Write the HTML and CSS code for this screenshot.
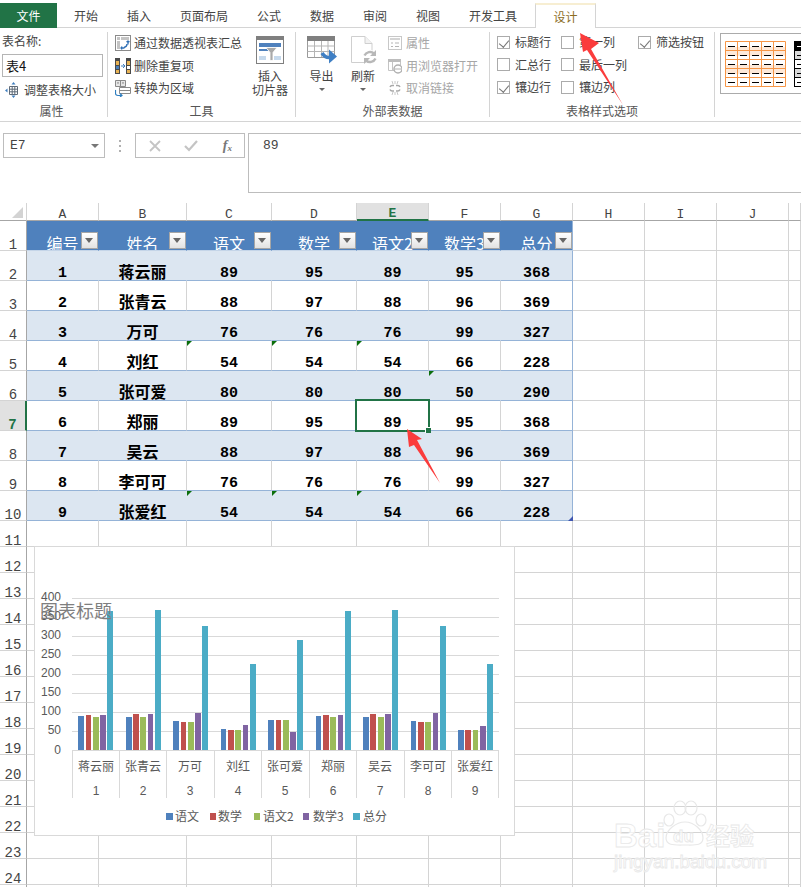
FILE: index.html
```html
<!DOCTYPE html>
<html lang="zh-CN">
<head>
<meta charset="utf-8">
<title>Excel 表格设计</title>
<link rel="stylesheet" href="styles.css">
</head>
<body>
<nav class="tabs">
  <div class="tab-file">文件</div>
  <ul class="tab-list">
    <li>开始</li><li>插入</li><li>页面布局</li><li>公式</li><li>数据</li><li>审阅</li><li>视图</li><li>开发工具</li>
  </ul>
  <div class="tab-active">设计</div>
</nav>

<section class="ribbon">
  <div class="group g-props">
    <div class="group-body">
      <div class="field-label">表名称:</div>
      <div class="name-input">表4</div>
      <div class="row-btn resize-btn">
        <svg width="16" height="16" viewBox="0 0 16 16"><path d="M4.5 4.5h8v8h-8zM7.2 4.5v8M9.8 4.5v8M4.500 7.200h8M4.500 9.800h8" fill="#fff" stroke="#5f6b78"/><path d="M8.500 0l2 2.500h-4zM8.500 16l2-2.500h-4zM0 8.500l2.500-2v4z" fill="#3f7fbf"/></svg>
        <span>调整表格大小</span>
      </div>
    </div>
    <div class="group-label">属性</div>
  </div>

  <div class="group g-tools">
    <div class="group-body tools-body">
      <div class="btn-list tools-list">
        <div class="row-btn">
          <svg width="16" height="16" viewBox="0 0 16 16"><rect x=".5" y=".5" width="15" height="15" fill="#fff" stroke="#8a8a8a"/><path d="M2 2h3v3H2zM6 2h8v3H6zM2 6h3v8H2z" fill="#c4c4c4"/><path d="M6 13h3.500M13 6v3.500M7 11.500L6 13l1 1.500M11.500 7L13 6l1.500 1M12 9c0 2-1 3-3 3.500" fill="none" stroke="#2f6fb5" stroke-width="1.300"/></svg>
          <span>通过数据透视表汇总</span>
        </div>
        <div class="row-btn">
          <svg width="16" height="16" viewBox="0 0 16 16"><path d="M0 0h5v16H0zM11 0h5v16h-5z" fill="#4a4a4a"/><path d="M1 3h3v4H1zM12 3h3v4h-3z" fill="#e8b354"/><path d="M1 8h3v3H1z" fill="#4a7fb8"/><path d="M1 12h3v3H1zM12 12h3v3h-3z" fill="#e8b354"/><path d="M12 8h3v3h-3z" fill="#fff"/><path d="M6 8h3.500M8 6l2 2-2 2" fill="none" stroke="#3f7fbf"/></svg>
          <span>删除重复项</span>
        </div>
        <div class="row-btn">
          <svg width="16" height="17" viewBox="0 0 16 17"><path d="M.5.500h10v6H.5z" fill="#e6e6e6" stroke="#8a8a8a"/><path d="M5.500.500v6" stroke="#8a8a8a"/><path d="M2 2.500h2l-1 1.500zM7 2.500h2l-1 1.500z" fill="#666"/><path d="M4.500 7.500h11v6h-11z" fill="#fff" stroke="#8a8a8a"/><path d="M4.500 10.500h11" stroke="#8a8a8a"/><path d="M.5 10v3.500c0 1.500 1 2 2.500 2h4M5 13.500l2 2-2 1.500M.5 10l-.5 1" fill="none" stroke="#2f7fc0" stroke-width="1.200"/></svg>
          <span>转换为区域</span>
        </div>
      </div>
      <div class="big-btn slicer-btn">
        <svg width="28" height="28" viewBox="0 0 28 28"><rect x=".5" y=".5" width="27" height="27" fill="#fff" stroke="#7f7f7f"/><rect width="28" height="4" fill="#7f7f7f"/><rect x="3" y="7" width="22" height="4" fill="#4f81bd"/><path d="M3 13h8l2 2H3z" fill="#4f81bd"/><path d="M3 20h7v4H3zM18 20h7v4h-7z" fill="#c6d9ec"/><path d="M10 11.500h11l-4 5v8h-3v-8z" fill="#a9a9a9" stroke="#fff" stroke-width=".8"/></svg>
        <span class="big-label">插入<br>切片器</span>
      </div>
    </div>
    <div class="group-label">工具</div>
  </div>

  <div class="group g-data">
    <div class="group-body tools-body">
      <div class="big-btn export-btn">
        <svg width="30" height="28" viewBox="0 0 30 28"><path d="M.5 4.500h27v17H.5z" fill="#fff" stroke="#9a9a9a"/><rect width="28" height="5" fill="#7f7f7f"/><path d="M.5 10h27M.5 15.500h27M7.500 5v16M14.500 5v16M21 5v16" stroke="#b5b5b5"/><path d="M15 17c3 5 6 5 10 4" fill="none" stroke="#3f7fc4" stroke-width="3.500"/><path d="M22 13.500l8 7-8 7z" fill="#3f7fc4"/></svg>
        <span class="big-label">导出</span>
        <i class="caret"></i>
      </div>
      <div class="big-btn refresh-btn">
        <svg width="27" height="28" viewBox="0 0 27 28"><path d="M1.500 .500H15l7 7v19H1.500z" fill="#fff" stroke="#cfcfcf"/><path d="M15 .500v7h7" fill="#f2f2f2" stroke="#cfcfcf"/><circle cx="20" cy="21" r="7" fill="#fff"/><path d="M14.500 19.500A6 6 0 0 1 24 17.500M25.500 22.500A6 6 0 0 1 16 24.500" fill="none" stroke="#b8b8b8" stroke-width="2.400"/><path d="M26 14v6h-6zM14 28v-6h6z" fill="#b8b8b8"/></svg>
        <span class="big-label">刷新</span>
        <i class="caret"></i>
      </div>
      <div class="btn-list data-list">
        <div class="row-btn off">
          <svg width="14" height="14" viewBox="0 0 14 14"><rect x=".5" y=".5" width="13" height="13" fill="#fff" stroke="#c8c8c8"/><path d="M2 3h10" stroke="#d4d4d4" stroke-width="2"/><path d="M3 7h2M3 10.500h2M7 7h4M7 10.500h4" stroke="#b5b5b5"/></svg>
          <span>属性</span>
        </div>
        <div class="row-btn off">
          <svg width="14" height="16" viewBox="0 0 14 16"><path d="M.5 1.500h12v11H.5z" fill="#fff" stroke="#c4c4c4"/><rect width="13" height="3" y="1" fill="#bdbdbd"/><path d="M4.500 4v8" stroke="#c4c4c4"/><circle cx="10" cy="11" r="4" fill="#fff" stroke="#b0b0b0" stroke-width="1.500"/><path d="M7 11h6" stroke="#b0b0b0"/></svg>
          <span>用浏览器打开</span>
        </div>
        <div class="row-btn off">
          <svg width="14" height="14" viewBox="0 0 14 14"><path d="M2 6a2.500 2.500 0 0 1 2.500-1.500H6M8 4.500h1.500A2.500 2.500 0 0 1 12 6M2 8.500A2.500 2.500 0 0 0 4.500 10H6M8 10h1.500A2.500 2.500 0 0 0 12 8.500" fill="none" stroke="#a8a8a8" stroke-width="1.500"/><path d="M4 0l1 3M7 0v3M10 0L9 3M4 14l1-3M7 14v-3M10 14l-1-3" stroke="#c8c8c8"/></svg>
          <span>取消链接</span>
        </div>
      </div>
    </div>
    <div class="group-label">外部表数据</div>
  </div>

  <div class="group g-options">
    <div class="group-body option-grid">
      <label class="opt"><i class="box on"></i>标题行</label>
      <label class="opt"><i class="box"></i>第一列</label>
      <label class="opt"><i class="box on"></i>筛选按钮</label>
      <label class="opt"><i class="box"></i>汇总行</label>
      <label class="opt"><i class="box"></i>最后一列</label>
      <span></span>
      <label class="opt"><i class="box on"></i>镶边行</label>
      <label class="opt"><i class="box"></i>镶边列</label>
      <span></span>
    </div>
    <div class="group-label">表格样式选项</div>
  </div>

  <div class="group g-gallery">
    <div class="gallery">
      <svg width="86" height="59" viewBox="0 0 86 59">
        <g fill="#fde9d9"><rect x="4" y="13" width="61" height="9"/><rect x="4" y="31" width="61" height="9"/></g>
        <path d="M4.500 7.500h60v45h-60zM4.500 16.500h60M4.500 25.500h60M4.500 34.500h60M4.500 43.500h60M16.500 7.500v45M28.500 7.500v45M40.500 7.500v45M52.500 7.500v45" fill="none" stroke="#f79646"/>
        <path d="M7 12.500h7M19 12.500h7M31 12.500h7M43 12.500h7M55 12.500h7M7 21.500h7M19 21.500h7M31 21.500h7M43 21.500h7M55 21.500h7M7 30.500h7M19 30.500h7M31 30.500h7M43 30.500h7M55 30.500h7M7 39.500h7M19 39.500h7M31 39.500h7M43 39.500h7M55 39.500h7M7 48.500h7M19 48.500h7M31 48.500h7M43 48.500h7M55 48.500h7" stroke="#000"/>
        <rect x="73" y="7" width="13" height="10" fill="#000"/>
        <rect x="74" y="17" width="12" height="8" fill="#d9d9d9"/><rect x="74" y="35" width="12" height="8" fill="#d9d9d9"/>
        <path d="M73.500 7v46M73 25.500h13M73 34.500h13M73 43.500h13M73 52.500h13M73 16.500h13" fill="none" stroke="#000"/>
        <path d="M76 12.500h7" stroke="#fff"/><path d="M76 21.500h7M76 30.500h7M76 39.500h7M76 48.500h7" stroke="#000"/>
      </svg>
    </div>
  </div>
</section>

<section class="formula">
  <div class="name-box"><span>E7</span><i class="caret dark"></i></div>
  <div class="dots"><i></i><i></i><i></i></div>
  <div class="fx-box">
    <svg width="14" height="12" viewBox="0 0 14 12"><path d="M2 1l10 10M12 1L2 11" stroke="#c4c4c4" stroke-width="1.800"/></svg>
    <svg class="check" width="14" height="12" viewBox="0 0 14 12"><path d="M1 6l4 4 8-9" fill="none" stroke="#c4c4c4" stroke-width="2.200"/></svg>
    <span class="fx">f<sub>x</sub></span>
  </div>
  <div class="formula-input">89</div>
</section>

<main class="sheet">
  <table class="grid">
    <colgroup>
      <col class="w27"><col class="w72"><col class="w88"><col class="w85"><col class="w85"><col class="w72"><col class="w72"><col class="w72"><col class="w72"><col class="w72"><col class="w72"><col class="w12">
    </colgroup>
    <thead>
      <tr class="cols">
        <th class="corner"><i></i></th><th>A</th><th>B</th><th>C</th><th>D</th><th class="cur">E</th><th>F</th><th>G</th><th>H</th><th>I</th><th>J</th><th></th>
      </tr>
    </thead>
    <tbody>
      <tr class="head"><th class="rh">1</th><td>编号<i class="flt"></i></td><td>姓名<i class="flt"></i></td><td>语文<i class="flt"></i></td><td>数学<i class="flt"></i></td><td>语文2<i class="flt"></i></td><td>数学3<i class="flt"></i></td><td>总分<i class="flt"></i></td><td class="x"></td><td class="x"></td><td class="x"></td><td class="x"></td></tr>
      <tr class="data band"><th class="rh">2</th><td>1</td><td class="nm">蒋云丽</td><td>89</td><td>95</td><td>89</td><td>95</td><td>368</td><td class="x"></td><td class="x"></td><td class="x"></td><td class="x"></td></tr>
      <tr class="data"><th class="rh">3</th><td>2</td><td class="nm">张青云</td><td>88</td><td>97</td><td>88</td><td>96</td><td>369</td><td class="x"></td><td class="x"></td><td class="x"></td><td class="x"></td></tr>
      <tr class="data band"><th class="rh">4</th><td>3</td><td class="nm">万可</td><td>76</td><td>76</td><td>76</td><td>99</td><td>327</td><td class="x"></td><td class="x"></td><td class="x"></td><td class="x"></td></tr>
      <tr class="data"><th class="rh">5</th><td>4</td><td class="nm">刘红</td><td class="tri">54</td><td class="tri">54</td><td class="tri">54</td><td>66</td><td>228</td><td class="x"></td><td class="x"></td><td class="x"></td><td class="x"></td></tr>
      <tr class="data band"><th class="rh">6</th><td>5</td><td class="nm">张可爱</td><td>80</td><td>80</td><td>80</td><td class="tri">50</td><td>290</td><td class="x"></td><td class="x"></td><td class="x"></td><td class="x"></td></tr>
      <tr class="data"><th class="rh cur">7</th><td>6</td><td class="nm">郑丽</td><td>89</td><td>95</td><td class="sel">89<i class="handle"></i></td><td>95</td><td>368</td><td class="x"></td><td class="x"></td><td class="x"></td><td class="x"></td></tr>
      <tr class="data band"><th class="rh">8</th><td>7</td><td class="nm">吴云</td><td>88</td><td>97</td><td>88</td><td>96</td><td>369</td><td class="x"></td><td class="x"></td><td class="x"></td><td class="x"></td></tr>
      <tr class="data"><th class="rh">9</th><td>8</td><td class="nm">李可可</td><td>76</td><td>76</td><td>76</td><td>99</td><td>327</td><td class="x"></td><td class="x"></td><td class="x"></td><td class="x"></td></tr>
      <tr class="data band"><th class="rh">10</th><td>9</td><td class="nm">张爱红</td><td class="tri">54</td><td class="tri">54</td><td class="tri">54</td><td>66</td><td class="end">228</td><td class="x"></td><td class="x"></td><td class="x"></td><td class="x"></td></tr>
      <tr class="sm"><th class="rh">11</th><td></td><td></td><td></td><td></td><td></td><td></td><td></td><td></td><td></td><td></td><td></td></tr>
      <tr class="sm"><th class="rh">12</th><td></td><td></td><td></td><td></td><td></td><td></td><td></td><td></td><td></td><td></td><td></td></tr>
      <tr class="sm"><th class="rh">13</th><td></td><td></td><td></td><td></td><td></td><td></td><td></td><td></td><td></td><td></td><td></td></tr>
      <tr class="sm"><th class="rh">14</th><td></td><td></td><td></td><td></td><td></td><td></td><td></td><td></td><td></td><td></td><td></td></tr>
      <tr class="sm"><th class="rh">15</th><td></td><td></td><td></td><td></td><td></td><td></td><td></td><td></td><td></td><td></td><td></td></tr>
      <tr class="sm"><th class="rh">16</th><td></td><td></td><td></td><td></td><td></td><td></td><td></td><td></td><td></td><td></td><td></td></tr>
      <tr class="sm"><th class="rh">17</th><td></td><td></td><td></td><td></td><td></td><td></td><td></td><td></td><td></td><td></td><td></td></tr>
      <tr class="sm"><th class="rh">18</th><td></td><td></td><td></td><td></td><td></td><td></td><td></td><td></td><td></td><td></td><td></td></tr>
      <tr class="sm"><th class="rh">19</th><td></td><td></td><td></td><td></td><td></td><td></td><td></td><td></td><td></td><td></td><td></td></tr>
      <tr class="sm"><th class="rh">20</th><td></td><td></td><td></td><td></td><td></td><td></td><td></td><td></td><td></td><td></td><td></td></tr>
      <tr class="sm"><th class="rh">21</th><td></td><td></td><td></td><td></td><td></td><td></td><td></td><td></td><td></td><td></td><td></td></tr>
      <tr class="sm"><th class="rh">22</th><td></td><td></td><td></td><td></td><td></td><td></td><td></td><td></td><td></td><td></td><td></td></tr>
      <tr class="sm"><th class="rh">23</th><td></td><td></td><td></td><td></td><td></td><td></td><td></td><td></td><td></td><td></td><td></td></tr>
      <tr class="sm"><th class="rh">24</th><td></td><td></td><td></td><td></td><td></td><td></td><td></td><td></td><td></td><td></td><td></td></tr>
      <tr class="sm"><th class="rh"></th><td></td><td></td><td></td><td></td><td></td><td></td><td></td><td></td><td></td><td></td><td></td></tr>
    </tbody>
  </table>

  <svg class="chart" width="482" height="290" viewBox="34 546 482 290">
    <rect x="34.500" y="546.500" width="480" height="289" fill="#fff" stroke="#d9d9d9"/>
    <path class="gridline" d="M72 598.500h427M72 617.500h427M72 636.500h427M72 655.500h427M72 674.500h427M72 693.500h427M72 712.500h427M72 731.500h427"/>
    <path class="axis" d="M72 750.500h427M72.500 750v48M119.500 750v48M166.500 750v48M214.500 750v48M261.500 750v48M309.500 750v48M356.500 750v48M404.500 750v48M451.500 750v48M498.500 750v48"/>
    <g class="ticks">
      <text x="61" y="601">400</text><text x="61" y="620">350</text><text x="61" y="639">300</text><text x="61" y="658">250</text><text x="61" y="677">200</text><text x="61" y="696">150</text><text x="61" y="715">100</text><text x="61" y="734">50</text><text x="61" y="754">0</text>
    </g>
    <g class="s1">
      <rect x="78" y="716" width="6" height="34"/><rect x="126" y="717" width="6" height="33"/><rect x="173" y="721" width="6" height="29"/><rect x="221" y="729" width="5" height="21"/><rect x="268" y="720" width="6" height="30"/><rect x="316" y="716" width="5" height="34"/><rect x="363" y="717" width="6" height="33"/><rect x="411" y="721" width="5" height="29"/><rect x="458" y="730" width="6" height="20"/>
    </g>
    <g class="s2">
      <rect x="86" y="715" width="5" height="35"/><rect x="133" y="714" width="6" height="36"/><rect x="181" y="722" width="5" height="28"/><rect x="228" y="730" width="6" height="20"/><rect x="276" y="720" width="5" height="30"/><rect x="323" y="715" width="6" height="35"/><rect x="370" y="714" width="6" height="36"/><rect x="418" y="722" width="6" height="28"/><rect x="465" y="730" width="6" height="20"/>
    </g>
    <g class="s3">
      <rect x="93" y="717" width="6" height="33"/><rect x="140" y="717" width="6" height="33"/><rect x="188" y="722" width="6" height="28"/><rect x="235" y="730" width="6" height="20"/><rect x="283" y="720" width="6" height="30"/><rect x="330" y="717" width="6" height="33"/><rect x="378" y="717" width="6" height="33"/><rect x="425" y="722" width="6" height="28"/><rect x="473" y="730" width="5" height="20"/>
    </g>
    <g class="s4">
      <rect x="100" y="715" width="6" height="35"/><rect x="148" y="714" width="5" height="36"/><rect x="195" y="713" width="6" height="37"/><rect x="243" y="725" width="5" height="25"/><rect x="290" y="732" width="6" height="18"/><rect x="338" y="715" width="5" height="35"/><rect x="385" y="714" width="6" height="36"/><rect x="433" y="713" width="5" height="37"/><rect x="480" y="726" width="6" height="24"/>
    </g>
    <g class="s5">
      <rect x="107" y="611" width="6" height="139"/><rect x="155" y="610" width="6" height="140"/><rect x="202" y="626" width="6" height="124"/><rect x="250" y="664" width="6" height="86"/><rect x="297" y="640" width="6" height="110"/><rect x="345" y="611" width="6" height="139"/><rect x="392" y="610" width="6" height="140"/><rect x="440" y="626" width="6" height="124"/><rect x="487" y="664" width="6" height="86"/>
    </g>
    <text class="chart-title" x="40" y="618">图表标题</text>
    <g class="cat">
      <text x="96" y="771">蒋云丽</text><text x="143" y="771">张青云</text><text x="190" y="771">万可</text><text x="238" y="771">刘红</text><text x="285" y="771">张可爱</text><text x="333" y="771">郑丽</text><text x="380" y="771">吴云</text><text x="428" y="771">李可可</text><text x="475" y="771">张爱红</text>
    </g>
    <g class="idx">
      <text x="96" y="795">1</text><text x="143" y="795">2</text><text x="190" y="795">3</text><text x="238" y="795">4</text><text x="285" y="795">5</text><text x="333" y="795">6</text><text x="380" y="795">7</text><text x="428" y="795">8</text><text x="475" y="795">9</text>
    </g>
    <g class="legend">
      <rect class="k1" x="166" y="813" width="7" height="7"/><text x="175" y="821">语文</text>
      <rect class="k2" x="210" y="813" width="6" height="7"/><text x="218" y="821">数学</text>
      <rect class="k3" x="254" y="813" width="6" height="7"/><text x="263" y="821">语文2</text>
      <rect class="k4" x="303" y="813" width="6" height="7"/><text x="313" y="821">数学3</text>
      <rect class="k5" x="353" y="813" width="7" height="7"/><text x="363" y="821">总分</text>
    </g>
  </svg>
</main>

<svg class="overlay" width="801" height="887" viewBox="0 0 801 887">
  <g class="wm">
    <text class="wm-bai" x="614" y="847">Bai</text>
    <ellipse cx="680" cy="808" rx="6" ry="7"/><ellipse cx="691" cy="808" rx="6" ry="7"/><ellipse cx="669" cy="820" rx="5" ry="6"/><ellipse cx="701" cy="820" rx="5" ry="6"/>
    <path d="M666 838c0-8 10-16 19-16s18 8 18 16-8 7-18 7-19 1-19-7z"/>
    <text class="wm-du" x="673" y="842">du</text>
    <text class="wm-cn" x="706" y="845">经验</text>
    <text class="wm-url" x="614" y="868">jingyan.baidu.com</text>
  </g>
  <path class="arrow" d="M580 33L599 43 591 49 623 105 587 50 583 52Z"/>
  <path class="arrow" d="M407 429L422 439 417 440 440 483 414 445 409 447Z"/>
</svg>
</body>
</html>
```

FILE: styles.css
```css
* { box-sizing: border-box; }
html, body { margin: 0; padding: 0; }
body {
  position: relative;
  width: 801px;
  height: 887px;
  overflow: hidden;
  background: #fff;
  color: #444;
  font: 12px/18px "Noto Sans CJK SC", "Noto Sans", sans-serif;
}
ul { margin: 0; padding: 0; list-style: none; }
i { font-style: normal; }
svg { display: block; flex: none; }

/* tabs */
.tabs {
  display: flex;
  height: 28px;
  padding-top: 3px;
  border-bottom: 1px solid #d4d4d4;
}
.tab-file {
  width: 57px;
  height: 25px;
  background: #217346;
  color: #fff;
  text-align: center;
  line-height: 25px;
}
.tab-list { display: flex; margin-left: 2.5px; }
.tab-list li { padding: 0 14.5px; line-height: 25px; }
.tab-active {
  width: 61px;
  height: 25px;
  margin-left: 3.5px;
  background: #fff;
  border: 1px solid #d4d4d4;
  border-top: 2px solid #f7eed2;
  border-bottom: 0;
  color: #8c6d1f;
  text-align: center;
  line-height: 24px;
}

/* ribbon */
.ribbon {
  display: flex;
  height: 94px;
  padding: 4px 0;
  border-bottom: 1px solid #d4d4d4;
  overflow: hidden;
}
.group {
  display: flex;
  flex-direction: column;
  flex: none;
  border-right: 1px solid #d4d4d4;
}
.group-body { flex: 1; min-height: 0; }
.group-label { height: 12px; margin-top: 1px; line-height: 12px; text-align: center; color: #555; }
.g-props { width: 108px; }
.g-tools { width: 188px; }
.g-data { width: 194px; }
.g-options { width: 225px; }
.g-gallery { width: 86px; border-right: 0; }
.g-props .group-body { padding-left: 2px; }
.g-tools .group-body { padding-left: 7px; }
.g-data .group-body { padding-left: 4px; }
.g-options .group-body { padding-left: 7px; }
.g-props .group-label { padding-right: 4px; }
.g-tools .group-label { padding-right: 0; }

.field-label { height: 18px; }
.name-input {
  width: 101px;
  height: 23px;
  margin-top: 4px;
  padding-left: 3px;
  border: 1px solid #b5b5b5;
  color: #111;
  font-size: 13px;
  line-height: 21px;
}
.row-btn { display: flex; align-items: center; height: 22px; gap: 3px; white-space: nowrap; }
.resize-btn { margin-top: 2px; margin-left: 3px; }
.btn-list { display: flex; flex-direction: column; gap: .5px; }
.tools-body { display: flex; }
.tools-list { width: 133px; }
.big-btn { display: flex; flex-direction: column; align-items: center; padding-top: 4px; }
.big-label { display: block; margin-top: 5px; line-height: 14px; text-align: center; white-space: nowrap; }
.slicer-btn { width: 44px; }
.export-btn { width: 43px; }
.refresh-btn { width: 40px; }
.caret {
  display: block;
  width: 0;
  height: 0;
  margin-top: 5px;
  border: 3px solid transparent;
  border-top: 3px solid #666;
  border-bottom: 0;
}
.data-list { margin-left: 5px; }
.row-btn.off { gap: 4px; color: #a6a6a6; }

.option-grid {
  display: grid;
  grid-template-columns: 64px 77px 1fr;
  grid-auto-rows: 22.5px;
  margin-top: -1px;
}
.opt { display: flex; align-items: center; gap: 5px; white-space: nowrap; }
.box {
  position: relative;
  display: block;
  width: 13px;
  height: 13px;
  background: #fff;
  border: 1px solid #ababab;
}
.box.on::after {
  content: "";
  position: absolute;
  left: 3px;
  top: 1px;
  width: 5px;
  height: 8px;
  border: solid #777;
  border-width: 0 1px 1px 0;
  transform: rotate(40deg);
}
.gallery {
  width: 90px;
  height: 61px;
  margin: 1px 0 0 5px;
  border: 1px solid #ababab;
  border-right: 0;
  overflow: hidden;
}

/* formula bar */
.formula {
  display: flex;
  align-items: flex-start;
  height: 81px;
  padding: 11px 0 0 3px;
}
.name-box, .fx-box, .formula-input { border: 1px solid #bdbdbd; }
.name-box {
  display: flex;
  align-items: center;
  justify-content: space-between;
  width: 102px;
  height: 25px;
  padding: 0 5px 0 6px;
  font: 13px "Liberation Mono", monospace;
}
.caret.dark { margin-top: 0; border-width: 4px; border-top-color: #777; border-bottom: 0; }
.dots {
  display: flex;
  flex-direction: column;
  align-items: center;
  justify-content: center;
  gap: 3px;
  width: 30px;
  height: 25px;
}
.dots i { display: block; width: 2px; height: 2px; background: #b0b0b0; }
.fx-box {
  display: flex;
  align-items: center;
  justify-content: space-between;
  width: 110px;
  height: 25px;
  padding: 0 12px;
}
.check { margin-left: -3px; }
.fx { font: italic bold 14px "Liberation Serif", serif; color: #777; }
.fx sub { font-size: 9px; vertical-align: -1px; }
.formula-input {
  flex: 1;
  height: 60px;
  margin-left: 3px;
  padding: 2px 0 0 14px;
  border-right: 0;
  font: 13px/20px "Liberation Mono", monospace;
}

/* sheet */
.sheet { position: relative; }
.grid {
  width: 801px;
  table-layout: fixed;
  border-collapse: separate;
  border-spacing: 0;
}
.w27 { width: 27px; }
.w72 { width: 72px; }
.w88 { width: 88px; }
.w85 { width: 85px; }
.w12 { width: 12px; }

.grid th, .grid td {
  position: relative;
  padding: 0;
  border-right: 1px solid #d4d4d4;
  border-bottom: 1px solid #d4d4d4;
  vertical-align: bottom;
  text-align: center;
}
.cols th {
  height: 18px;
  border-bottom-color: #a6a6a6;
  font: 13px/11px "Liberation Mono", monospace;
  color: #444;
}
.cols th.cur {
  background: #e1e1e1;
  border-bottom: 2px solid #217346;
  color: #217346;
  font-weight: bold;
}
.cols .corner i {
  position: absolute;
  right: 3px;
  bottom: 2px;
  width: 0;
  height: 0;
  border: solid transparent;
  border-width: 0 0 11px 11px;
  border-bottom-color: #d3d3d3;
}
.grid .rh {
  border-right-color: #a6a6a6;
  font: 14px/10px "Liberation Mono", monospace;
  color: #444;
}
.grid .rh.cur {
  background: #e1e1e1;
  border-right: 2px solid #217346;
  color: #217346;
  font-weight: bold;
}
.head td {
  height: 30px;
  background: #4f81bd;
  border-color: #4f81bd;
  border-bottom-color: #c5d5e8;
  color: #fff;
  font: 16px/14px "Noto Sans CJK SC", sans-serif;
  white-space: nowrap;
  overflow: hidden;
}
.head td.x { background: #fff; border-color: #d4d4d4; }
.flt {
  position: absolute;
  right: 0;
  bottom: 1px;
  width: 17px;
  height: 17px;
  background: linear-gradient(#fff, #e2e2e2);
  border: 1px solid #a6a6a6;
}
.flt::after {
  content: "";
  position: absolute;
  left: 3px;
  top: 5px;
  border: 4px solid transparent;
  border-top: 5px solid #666;
  border-bottom: 0;
}
.data td {
  height: 30px;
  border-bottom-color: #95b3d7;
  font: bold 15px/12px "Liberation Mono", monospace;
  color: #000;
}
.data td.x { border-bottom-color: #d4d4d4; }
.data td:nth-child(8) { border-right-color: #95b3d7; }
.head td:nth-child(8) { border-right-color: #95b3d7; }
.data.band td:not(.x) { background: #dce6f1; border-right-color: #dce6f1; }
.data.band td:nth-child(8) { border-right-color: #95b3d7; }
.data td.nm {
  font: bold 16px/17px "Noto Sans CJK SC", sans-serif;
  overflow: hidden;
}
.tri::before {
  content: "";
  position: absolute;
  left: 0;
  top: 0;
  border: solid transparent;
  border-width: 5px 5px 0 0;
  border-top-color: #0b6e0b;
}
.sel { z-index: 2; }
.sel::before {
  content: "";
  position: absolute;
  left: -2px;
  top: -2px;
  right: -2px;
  bottom: -2px;
  border: 2px solid #217346;
}
.handle {
  position: absolute;
  right: -3px;
  bottom: -3px;
  width: 6px;
  height: 6px;
  background: #217346;
  border: 1px solid #fff;
  border-width: 1px 0 0 1px;
}
.end::after {
  content: "";
  position: absolute;
  right: -1px;
  bottom: -1px;
  border: solid transparent;
  border-width: 0 0 5px 5px;
  border-bottom-color: #3f55b0;
}
.sm th, .sm td { height: 26px; }

/* chart */
.chart {
  position: absolute;
  left: 34px;
  top: 343px;
  z-index: 3;
  font-family: "Noto Sans CJK SC", "Liberation Sans", sans-serif;
}
.gridline { stroke: #d9d9d9; fill: none; }
.axis { stroke: #d9d9d9; fill: none; }
.ticks text { font: 12px "Liberation Sans", sans-serif; fill: #595959; text-anchor: end; }
.s1, .k1 { fill: #4f81bd; }
.s2, .k2 { fill: #c0504d; }
.s3, .k3 { fill: #9bbb59; }
.s4, .k4 { fill: #8064a2; }
.s5, .k5 { fill: #4bacc6; }
.chart-title { font-size: 18px; fill: #7f7f7f; }
.cat text { font-size: 12px; fill: #595959; text-anchor: middle; }
.idx text { font: 12px "Liberation Sans", sans-serif; fill: #595959; text-anchor: middle; }
.legend text { font-size: 12px; fill: #595959; }

/* overlay */
.overlay { position: absolute; left: 0; top: 0; z-index: 4; pointer-events: none; }
.arrow { fill: #fb3c3c; }
.wm ellipse, .wm path { fill: none; stroke: #e8e8e8; stroke-width: 1.200; }
.wm text { fill: rgba(255,255,255,.7); stroke: #e8e8e8; stroke-width: .8; font-family: "Liberation Sans", sans-serif; font-weight: bold; }
.wm-bai { font-size: 33px; }
.wm-du { font-size: 17px; }
.wm .wm-cn { font-size: 24px; font-family: "Noto Sans CJK SC", sans-serif; }
.wm .wm-url { font-size: 19px; font-weight: normal; }
```
